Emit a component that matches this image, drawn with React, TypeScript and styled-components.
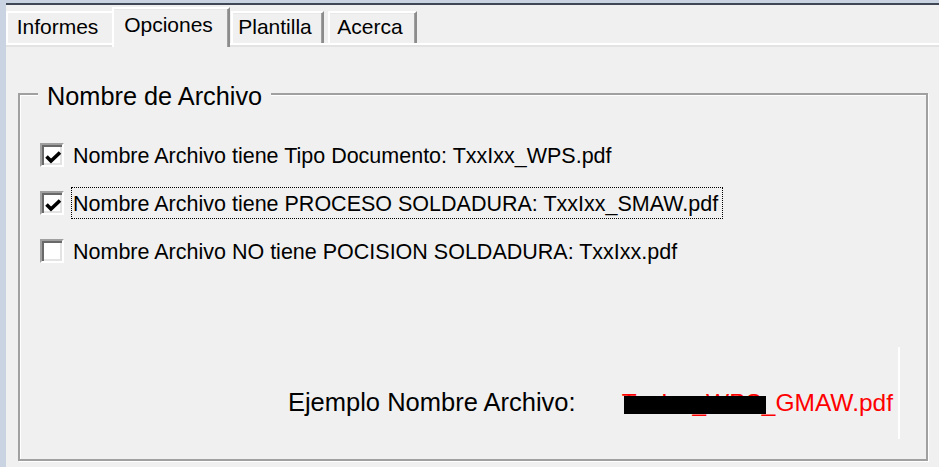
import React from "react";
import styled, { createGlobalStyle } from "styled-components";

const GlobalStyle = createGlobalStyle`
  html, body { margin: 0; padding: 0; background: #f0f0f0; }
  body { font-family: "Liberation Sans", Arial, sans-serif; color: #000; }
  * { box-sizing: border-box; }
`;

const Window = styled.div`
  width: 939px;
  height: 467px;
  display: flex;
  background: #f0f0f0;
  overflow: hidden;
`;

const SideStrip = styled.div`
  width: 6px;
  flex: none;
  background: #cad3e2;
`;

const Main = styled.div`
  flex: 1;
  min-width: 0;
  display: flex;
  flex-direction: column;
`;

const TopStrip = styled.div`
  flex: none;
  height: 5px;
  background: #c9d2e0;
  border-bottom: 2px solid #3e4753;
`;

const TabRow = styled.div`
  flex: none;
  height: 38px;
  display: flex;
  align-items: flex-end;
  position: relative;
  z-index: 1;
`;

const Tab = styled.div<{ $active?: boolean; $w: number; $ml?: number; $noRight?: boolean }>`
  flex: none;
  width: ${(p) => p.$w}px;
  margin-left: ${(p) => p.$ml ?? 0}px;
  height: ${(p) => (p.$active ? 40 : 32)}px;
  margin-bottom: ${(p) => (p.$active ? -4 : 0)}px;
  padding: ${(p) => (p.$active ? 4 : 2)}px 5px 0 0;
  background: #f0f0f0;
  border-top: 2px solid #ffffff;
  border-left: 2px solid #ffffff;
  border-right: ${(p) => (p.$noRight ? "0" : "2px solid #8c8c8c")};
  box-shadow: ${(p) => (p.$noRight ? "none" : "inset -1px 0 0 #a0a0a0, inset 0 1px 0 #e8e8e8")};
  font-size: 21px;
  line-height: 24px;
  text-align: center;
  white-space: nowrap;
`;

const TabBase = styled.div`
  flex: none;
  height: 4px;
  border-top: 2px solid #ffffff;
  background: #e3e3e3;
`;

const Page = styled.div`
  flex: 1;
  padding: 46px 11px 0 12px;
`;

const GroupBox = styled.section`
  height: 368px;
  display: flex;
  flex-direction: column;
  border: 2px solid #a0a0a0;
  box-shadow: 1px 1px 0 #ffffff, inset 1px 1px 0 #ffffff;
`;

const Legend = styled.h2`
  align-self: flex-start;
  margin: -13px 0 0 18px;
  padding: 0 9px;
  background: #f0f0f0;
  font-size: 25.3px;
  line-height: 28px;
  font-weight: normal;
  white-space: nowrap;
`;

const Options = styled.div`
  display: flex;
  flex-direction: column;
  gap: 16px;
  padding: 29px 0 0 20px;
`;

const OptionRow = styled.label`
  display: flex;
  align-items: flex-start;
  gap: 7px;
  height: 32px;
`;

const Box = styled.span`
  flex: none;
  width: 24px;
  height: 24px;
  margin-top: 4px;
  border: 2px solid;
  border-color: #a0a0a0 #ffffff #ffffff #a0a0a0;
  box-shadow: inset 2px 2px 0 #696969, inset -2px -2px 0 #e3e3e3;
  background: #ffffff;
  display: flex;
  align-items: center;
  justify-content: center;
`;

const OptionText = styled.span<{ $focused?: boolean }>`
  font-size: 21.5px;
  line-height: 27px;
  padding: 3px 4px 0 1px;
  border: 1px dotted ${(p) => (p.$focused ? "#000" : "transparent")};
  white-space: nowrap;
`;

const ExampleRow = styled.div`
  margin-top: auto;
  margin-bottom: 20px;
  padding-right: 26px;
  display: flex;
  justify-content: flex-end;
  align-items: flex-start;
`;

const ExampleLabel = styled.span`
  margin-top: 41px;
  margin-right: 46px;
  font-size: 25.5px;
  line-height: 29px;
  white-space: nowrap;
`;

const ExampleValue = styled.div`
  height: 92px;
  padding: 41px 5px 0 0;
  border-right: 2px solid #ffffff;
  font-size: 24.5px;
  line-height: 29px;
  color: #ff0000;
  white-space: nowrap;
`;

const ValueText = styled.span`
  position: relative;
`;

const Redaction = styled.span`
  position: absolute;
  left: 2px;
  top: 7px;
  width: 142px;
  height: 18px;
  background: #000;
`;

const Check = () => (
  <svg width="20" height="20" viewBox="0 0 20 20">
    <polyline points="4.5,11.5 9,16 18,7.5" fill="none" stroke="#000" strokeWidth="3.6" />
  </svg>
);

const Checkbox = ({ checked }: { checked: boolean }) => <Box>{checked && <Check />}</Box>;

const options = [
  { text: "Nombre Archivo tiene Tipo Documento: TxxIxx_WPS.pdf", checked: true, focused: false },
  { text: "Nombre Archivo tiene PROCESO SOLDADURA: TxxIxx_SMAW.pdf", checked: true, focused: true },
  { text: "Nombre Archivo NO tiene POCISION SOLDADURA: TxxIxx.pdf", checked: false, focused: false },
];

export default function App() {
  return (
    <>
      <GlobalStyle />
      <Window>
        <SideStrip />
        <Main>
          <TopStrip />
          <TabRow>
            <Tab $w={106} $noRight>Informes</Tab>
            <Tab $w={118} $active>Opciones</Tab>
            <Tab $w={93} $ml={1}>Plantilla</Tab>
            <Tab $w={89} $ml={4}>Acerca</Tab>
          </TabRow>
          <TabBase />
          <Page>
            <GroupBox>
              <Legend>Nombre de Archivo</Legend>
              <Options>
                {options.map((o) => (
                  <OptionRow key={o.text}>
                    <Checkbox checked={o.checked} />
                    <OptionText $focused={o.focused}>{o.text}</OptionText>
                  </OptionRow>
                ))}
              </Options>
              <ExampleRow>
                <ExampleLabel>Ejemplo Nombre Archivo:</ExampleLabel>
                <ExampleValue>
                  <ValueText>
                    TxxIxx_WPS_GMAW.pdf
                    <Redaction />
                  </ValueText>
                </ExampleValue>
              </ExampleRow>
            </GroupBox>
          </Page>
        </Main>
      </Window>
    </>
  );
}
